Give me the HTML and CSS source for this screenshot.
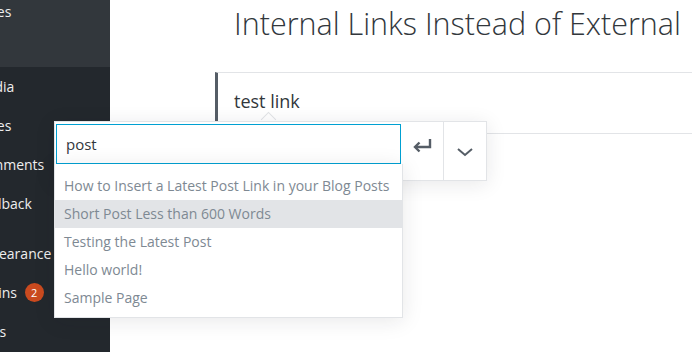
FILE: index.html
```html
<!DOCTYPE html>
<html lang="en">
<head>
    <meta charset="UTF-8">
    <title>Edit Post</title>
    <link rel="stylesheet" href="styles.css">
</head>
<body>

    <div class="sidebar">
        <div class="submenu">
            <div class="menu-item">Pages</div>
        </div>
        <div class="menu-item media">Media</div>
        <div class="menu-item">Pages</div>
        <div class="menu-item">Comments</div>
        <div class="menu-item feedback">Feedback</div>
        <div class="menu-item separated">Appearance</div>
        <div class="menu-item plugins">Plugins <span class="badge">2</span></div>
        <div class="menu-item users">Users</div>
    </div>

    <div class="editor">
        <h1 class="post-title">Internal Links Instead of External</h1>
        <div class="block">
            <p class="block-text">test link</p>
            <span class="arrow"></span>
        </div>
    </div>

    <div class="link-popover">
        <div class="url-row">
            <div class="url-input">post</div>
            <button class="icon-btn apply" title="Apply">
                <svg width="22" height="16" viewBox="0 0 22 16"><path d="M19 1v8H5" fill="none" stroke="#555d66" stroke-width="2.4"/><path d="M8.5 4.5 4 9l4.5 4.5" fill="none" stroke="#555d66" stroke-width="2.4"/></svg>
            </button>
            <button class="icon-btn more" title="Link settings">
                <svg width="18" height="10" viewBox="0 0 18 10"><path d="M2 2l7 6 7-6" fill="none" stroke="#555d66" stroke-width="2"/></svg>
            </button>
        </div>
        <ul class="suggestions">
            <li>How to Insert a Latest Post Link in your Blog Posts</li>
            <li class="selected">Short Post Less than 600 Words</li>
            <li>Testing the Latest Post</li>
            <li>Hello world!</li>
            <li>Sample Page</li>
        </ul>
    </div>

</body>
</html>
```

FILE: styles.css
```css
body {
    margin: 0;
    height: 352px;
    overflow: hidden;
    display: flex;
    background: #fff;
    font-family: "Open Sans", "Noto Sans", sans-serif;
}
.sidebar {
    width: 110px;
    flex-shrink: 0;
    background: #23282d;
    overflow: hidden;
    color: #eee;
    font-size: 14px;
}
.submenu {
    background: #32373c;
    height: 67px;
    padding-top: 1px;
    box-sizing: border-box;
}
.submenu .menu-item {
    height: 22px;
    line-height: 22px;
}
.menu-item {
    height: 39px;
    line-height: 39px;
    margin-left: -27px;
    white-space: nowrap;
}
.sidebar > .menu-item:first-of-type {
    margin-top: 3px;
}
.separated {
    margin-top: 11px;
}
.media {
    margin-left: -26px;
}
.feedback {
    margin-left: -30px;
}
.plugins {
    margin-left: -30px;
}
.users {
    margin-left: -31px;
}
.badge {
    display: inline-block;
    width: 19px;
    height: 19px;
    line-height: 19px;
    border-radius: 50%;
    background: #ca4a1f;
    color: #fff;
    font-size: 11px;
    text-align: center;
    margin-left: 4px;
    vertical-align: 1px;
}
.editor {
    flex: 1;
    padding-left: 105px;
}
.post-title {
    margin: 3px 0 0 19px;
    font-weight: 300;
    font-size: 30.5px;
    line-height: 41px;
    color: #32373c;
    white-space: nowrap;
}
.block {
    position: relative;
    margin-top: 28px;
    height: 60px;
    border-top: 1px solid #e2e4e7;
    border-bottom: 1px solid #e2e4e7;
    border-left: 3px solid #555d66;
}
.block-text {
    margin: 0;
    padding: 16px 0 0 16px;
    font-size: 18px;
    color: #32373c;
}
.arrow {
    position: absolute;
    left: 45px;
    top: 41px;
    width: 10px;
    height: 10px;
    background: #fff;
    border-left: 1px solid #e2e4e7;
    border-top: 1px solid #e2e4e7;
    transform: rotate(45deg);
}
.link-popover {
    position: absolute;
    left: 54px;
    top: 121px;
    width: 433px;
}
.url-row {
    display: flex;
    height: 60px;
    background: #fff;
    border: 1px solid #e2e4e7;
    box-shadow: 0 3px 20px rgba(25, 30, 35, 0.1);
    box-sizing: border-box;
}
.url-input {
    width: 345px;
    height: 40px;
    margin: 2px 0 0 1px;
    box-sizing: border-box;
    border: 1px solid #00a0d2;
    padding: 0 9px;
    line-height: 38px;
    font-size: 15px;
    color: #32373c;
}
.icon-btn {
    width: 42px;
    height: 58px;
    padding: 0;
    border: none;
    border-left: 1px solid #e2e4e7;
    background: #fff;
    display: flex;
    align-items: flex-start;
    justify-content: center;
}
.apply {
    border-left: none;
    padding-top: 16px;
}
.more {
    padding-top: 25px;
}
.suggestions {
    position: absolute;
    left: 0;
    top: 43px;
    width: 347px;
    margin: 0;
    padding: 8px 0 5px;
    list-style: none;
    background: #fff;
    border: 1px solid #e2e4e7;
    border-top: none;
    box-shadow: 0 3px 20px rgba(25, 30, 35, 0.1);
}
.suggestions li {
    height: 28px;
    line-height: 28px;
    padding-left: 9px;
    font-size: 14px;
    color: #7e8993;
    white-space: nowrap;
}
.suggestions li.selected {
    background: #e2e4e7;
}
```
